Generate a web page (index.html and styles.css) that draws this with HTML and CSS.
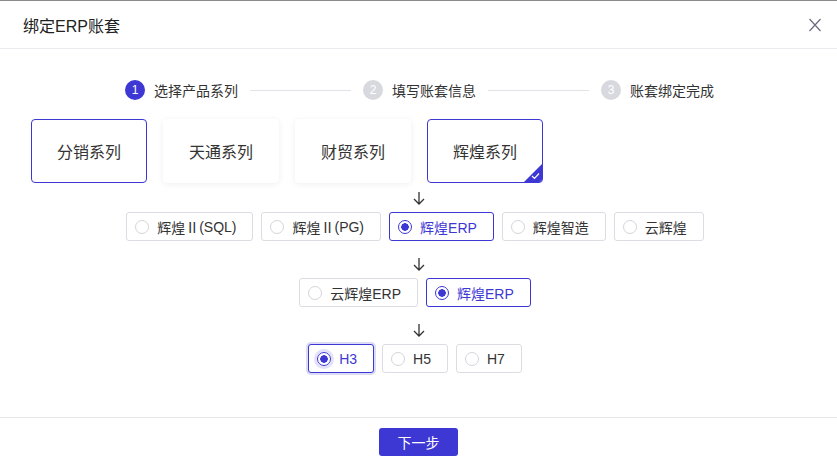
FILE: index.html
```html
<!DOCTYPE html>
<html lang="zh-CN">
<head>
  <meta charset="UTF-8">
  <meta name="viewport" content="width=device-width, initial-scale=1.0">
  <title>绑定ERP账套</title>
  <link rel="stylesheet" href="styles.css">
</head>
<body>

<div class="dialog">
  <div class="dialog-header">
    <span class="dialog-title">绑定ERP账套</span>
    <svg class="close" width="14" height="14" viewBox="0 0 14 14">
      <path d="M1.5 1 L12.5 13 M12.5 1 L1.5 13" stroke="#6b6b80" stroke-width="1.2" fill="none"/>
    </svg>
  </div>

  <div class="dialog-body">
    <div class="steps">
      <div class="step active"><span class="step-num">1</span><span class="step-text">选择产品系列</span></div>
      <div class="step-line"></div>
      <div class="step"><span class="step-num">2</span><span class="step-text">填写账套信息</span></div>
      <div class="step-line"></div>
      <div class="step"><span class="step-num">3</span><span class="step-text">账套绑定完成</span></div>
    </div>

    <div class="series">
      <div class="card outlined">分销系列</div>
      <div class="card">天通系列</div>
      <div class="card">财贸系列</div>
      <div class="card outlined checked">辉煌系列
        <span class="corner">
          <svg width="18" height="18" viewBox="0 0 18 18">
            <path d="M18 0 L18 18 L0 18 Z" fill="#3d37d4"/>
            <path d="M8 12 L10.5 14.5 L15 9.5" stroke="#fff" stroke-width="1.2" fill="none"/>
          </svg>
        </span>
      </div>
    </div>

    <div class="arrow">
      <svg width="12" height="13" viewBox="0 0 12 13"><path d="M6 0 V12 M1 7 L6 12 L11 7" stroke="#333" stroke-width="1.3" fill="none"/></svg>
    </div>
    <div class="radio-row">
      <label class="radio">辉煌<span class="roman">Ⅱ</span>(SQL)</label>
      <label class="radio">辉煌<span class="roman">Ⅱ</span>(PG)</label>
      <label class="radio on">辉煌ERP</label>
      <label class="radio">辉煌智造</label>
      <label class="radio">云辉煌</label>
    </div>

    <div class="arrow">
      <svg width="12" height="13" viewBox="0 0 12 13"><path d="M6 0 V12 M1 7 L6 12 L11 7" stroke="#333" stroke-width="1.3" fill="none"/></svg>
    </div>
    <div class="radio-row">
      <label class="radio">云辉煌ERP</label>
      <label class="radio on">辉煌ERP</label>
    </div>

    <div class="arrow">
      <svg width="12" height="13" viewBox="0 0 12 13"><path d="M6 0 V12 M1 7 L6 12 L11 7" stroke="#333" stroke-width="1.3" fill="none"/></svg>
    </div>
    <div class="radio-row">
      <label class="radio on focus">H3</label>
      <label class="radio">H5</label>
      <label class="radio">H7</label>
    </div>
  </div>

  <div class="dialog-footer">
    <button class="btn-primary">下一步</button>
  </div>
</div>

</body>
</html>
```

FILE: styles.css
```css
* {
  box-sizing: border-box;
}
body {
  margin: 0;
  font-family: "Liberation Sans", "Noto Sans CJK SC", sans-serif;
  color: #333;
  background: #fff;
}

.dialog {
  width: 837px;
  height: 465px;
  border-top: 1px solid #8a8a8a;
  background: #fff;
}

.dialog-header {
  height: 48px;
  display: flex;
  align-items: center;
  justify-content: space-between;
  padding: 0 15px 0 23px;
  border-bottom: 1px solid #ebebef;
}
.dialog-title {
  font-size: 16px;
  color: #222;
}
.close {
  display: block;
}

.dialog-body {
  height: 368px;
  padding: 0 30px 0 23px;
  display: flex;
  flex-direction: column;
  align-items: center;
}

/* step bar */
.steps {
  display: flex;
  align-items: center;
  margin-top: 31px;
  margin-left: 9px;
}
.step {
  display: flex;
  align-items: center;
  gap: 9px;
  font-size: 14px;
}
.step-num {
  width: 20px;
  height: 20px;
  border-radius: 50%;
  background: #d8d8df;
  color: #fff;
  font-size: 12px;
  display: flex;
  align-items: center;
  justify-content: center;
}
.step.active .step-num {
  background: #3d37d4;
}
.step-line {
  width: 101px;
  height: 1px;
  background: #e2e2e8;
  margin: 0 12px;
}

/* product series cards */
.series {
  align-self: flex-start;
  display: flex;
  gap: 16px;
  margin-top: 19px;
  margin-left: 8px;
}
.card {
  position: relative;
  width: 116px;
  height: 64px;
  border-radius: 4px;
  background: #fff;
  box-shadow: 0 1px 6px rgba(0, 0, 0, 0.07);
  display: flex;
  align-items: center;
  justify-content: center;
  font-size: 16px;
  color: #333;
}
.card.outlined {
  border: 1px solid #3d37d4;
  box-shadow: none;
}
.corner {
  position: absolute;
  right: 0;
  bottom: 0;
  line-height: 0;
  border-bottom-right-radius: 3px;
  overflow: hidden;
}

.arrow {
  margin-left: 8px;
  height: 13px;
  margin-top: 9px;
  margin-bottom: 7px;
  line-height: 0;
}

/* radio buttons */
.radio-row {
  display: flex;
  gap: 8px;
  margin-bottom: 8px;
}
.radio {
  height: 29px;
  display: flex;
  align-items: center;
  padding: 0 16px 0 8px;
  border: 1px solid #dcdce2;
  border-radius: 3px;
  font-size: 14px;
  color: #333;
  background: #fff;
  white-space: nowrap;
}
.radio::before {
  content: "";
  width: 14px;
  height: 14px;
  margin-right: 8px;
  border-radius: 50%;
  border: 1px solid #d4d4dc;
  box-sizing: border-box;
  flex: none;
}
.roman {
  font-family: "Noto Sans CJK SC", sans-serif;
}
.radio.on {
  border-color: #3d37d4;
  color: #3d37d4;
}
.radio.on::before {
  border-color: #3d37d4;
  background: radial-gradient(circle, #3d37d4 0 3.5px, #fff 4px);
}
.radio.focus {
  box-shadow: 0 0 0 2px rgba(61, 55, 212, 0.18);
}
.radio.focus::before {
  box-shadow: 0 0 0 3px rgba(61, 55, 212, 0.15);
}

.dialog-footer {
  border-top: 1px solid #e6e6ea;
  display: flex;
  justify-content: center;
  padding-top: 10px;
}
.btn-primary {
  width: 79px;
  height: 28px;
  border: none;
  border-radius: 3px;
  background: #3d37d4;
  color: #fff;
  font-size: 14px;
  font-family: inherit;
  cursor: pointer;
}
```
